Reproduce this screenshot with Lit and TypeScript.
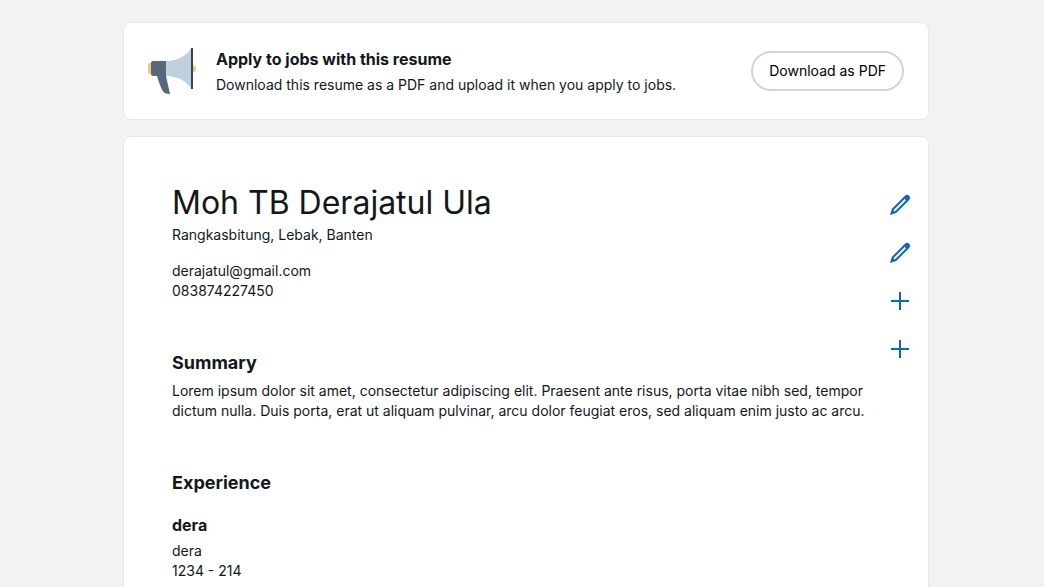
import { LitElement, html, css, svg } from "lit";
import { customElement } from "lit/decorators.js";

const pencil = svg`<path fill="currentColor" d="M21.13 2.86a3 3 0 00-4.17 0l-13 13L2 22l6.19-2L21.13 7a3 3 0 000-4.16zM6.77 18.57l-1.35-1.34L16.64 6 18 7.35z"/>`;
const plus = svg`<path fill="currentColor" d="M21 13h-8v8h-2v-8H3v-2h8V3h2v8h8z"/>`;

const actions = [
  { label: "Edit contact details", icon: pencil },
  { label: "Edit summary", icon: pencil },
  { label: "Add experience", icon: plus },
  { label: "Add section", icon: plus },
];

@customElement("app-root")
export class AppRoot extends LitElement {
  static styles = css`
    :host {
      display: block;
      box-sizing: border-box;
      min-height: 100vh;
      padding: 22px 16px 16px 24px;
      background: #f4f2f0;
      color: #11181c;
      font: 400 14px/20px Inter, "Liberation Sans", sans-serif;
    }
    *,
    *::before {
      box-sizing: border-box;
    }
    h1,
    h2,
    h3,
    p {
      margin: 0;
    }
    .page {
      display: grid;
      gap: 16px;
      max-width: 806px;
      margin: 0 auto;
    }
    .card {
      display: flex;
      background: #fff;
      border: 1px solid #e4e7eb;
      border-radius: 8px;
    }
    .banner {
      align-items: center;
      gap: 20px;
      padding: 24px;
    }
    .art {
      flex: none;
      width: 48px;
      height: 48px;
    }
    .pitch {
      flex: 1;
    }
    .title {
      margin-bottom: 4px;
      font-size: 16px;
      line-height: 24px;
      font-weight: 700;
    }
    button {
      font: inherit;
      cursor: pointer;
    }
    .download {
      height: 40px;
      padding: 0 16px;
      border: 2px solid #d4d4d8;
      border-radius: 20px;
      background: #fff;
      color: #000;
    }
    .resume {
      align-items: flex-start;
    }
    .content {
      flex: 1;
      display: grid;
      gap: 48px;
      padding: 48px 0 48px 48px;
    }
    .name {
      margin-bottom: 4px;
      font-size: 32px;
      line-height: 36px;
      font-weight: 400;
    }
    .contact {
      margin-top: 16px;
    }
    .heading {
      margin-bottom: 4px;
      font-size: 18px;
      line-height: 28px;
      font-weight: 700;
    }
    .job {
      margin-top: 16px;
    }
    .tools {
      flex: none;
      display: grid;
      padding: 44px 4px 0 0;
    }
    .tool {
      display: grid;
      place-items: center;
      width: 48px;
      height: 48px;
      padding: 0;
      border: 0;
      border-radius: 24px;
      background: none;
      color: #0a66c2;
    }
    .experience .heading {
      margin-bottom: 0;
    }
  `;

  render() {
    return html`
      <main class="page">
        <section class="card banner">
          <svg class="art" viewBox="0 0 48 48" aria-hidden="true">
            <path fill="#fac47d" d="M3 16H1.500Q0 16 0 17.500v8Q0 27 1.500 27H3z" />
            <path fill="#fac47d" d="M45 18.500a3 3.250 0 010 6.500z" />
            <path fill="#bfd0e1" d="M18 14C30 14 38 9 43 1.500v40C38 34 30 29 18 29z" />
            <path fill="#56687a" d="M5 14h13v15l4 18q-6 0-7.500-3.500Q12 39 9 29H5q-2 0-2-2V16q0-2 2-2z" />
            <path fill="#38434f" d="M43 1h2v41h-2z" />
          </svg>
          <div class="pitch">
            <h2 class="title">Apply to jobs with this resume</h2>
            <p>Download this resume as a PDF and upload it when you apply to jobs.</p>
          </div>
          <button class="download" type="button">Download as PDF</button>
        </section>

        <article class="card resume">
          <div class="content">
            <header>
              <h1 class="name">Moh TB Derajatul Ula</h1>
              <p>Rangkasbitung, Lebak, Banten</p>
              <div class="contact">
                <p>derajatul@gmail.com</p>
                <p>083874227450</p>
              </div>
            </header>
            <section>
              <h2 class="heading">Summary</h2>
              <p>
                Lorem ipsum dolor sit amet, consectetur adipiscing elit. Praesent ante risus, porta
                vitae nibh sed, tempor dictum nulla. Duis porta, erat ut aliquam pulvinar, arcu dolor
                feugiat eros, sed aliquam enim justo ac arcu.
              </p>
            </section>
            <section class="experience">
              <h2 class="heading">Experience</h2>
              <div class="job">
                <h3 class="title">dera</h3>
                <p>dera</p>
                <p>1234 - 214</p>
              </div>
            </section>
          </div>
          <div class="tools">
            ${actions.map(
              (a) => html`<button class="tool" type="button" aria-label=${a.label}>
                <svg width="24" height="24" viewBox="0 0 24 24" aria-hidden="true">${a.icon}</svg>
              </button>`
            )}
          </div>
        </article>
      </main>
    `;
  }
}
